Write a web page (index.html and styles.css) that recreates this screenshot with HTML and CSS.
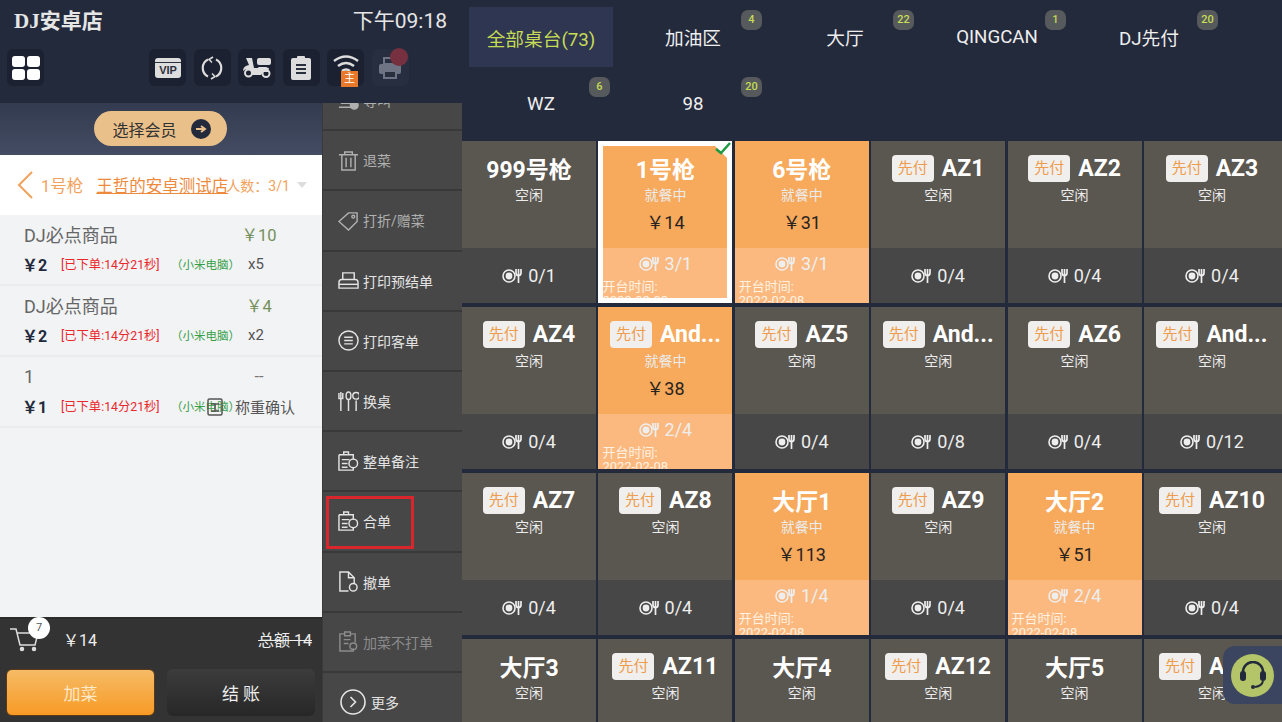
FILE: index.html

```html
<!DOCTYPE html>
<html lang="zh-CN">
<head>
  <meta charset="UTF-8" />
  <title>DJ安卓店</title>
  <link rel="stylesheet" href="styles.css">
</head>
<body>
<svg class="defs" width="0" height="0">
  <symbol id="seat" viewBox="0 0 20 16">
    <circle cx="7" cy="8" r="6" fill="none" stroke="currentColor" stroke-width="1.6"/>
    <circle cx="7" cy="8" r="3.4" fill="currentColor"/>
    <path d="M14 1v4q0 2.500 2.500 2.500t2.500-2.500v-4M16.500 1v14" fill="none" stroke="currentColor" stroke-width="1.700"/>
  </symbol>
</svg>

<div class="app">
  <section class="side">
    <header class="top">
      <div class="title-row">
        <span class="shop">DJ安卓店</span>
        <span class="clock">下午09:18</span>
      </div>
      <div class="tool-row">
        <span class="tile grid-tile">
          <svg width="28" height="24" viewBox="0 0 28 24" fill="#fff"><rect width="13" height="11" rx="3"/><rect x="15" width="13" height="11" rx="3"/><rect y="13" width="13" height="11" rx="3"/><rect x="15" y="13" width="13" height="11" rx="3"/></svg>
        </span>
        <span class="tile">
          <svg width="26" height="20" viewBox="0 0 26 20"><rect width="26" height="20" rx="3" fill="#ddd"/><rect x="1.500" y="6" width="23" height="12" fill="#ddd"/><path d="M0 4.500h26" stroke="#2a2f3d" stroke-width="1"/><text x="13" y="16" class="vip">VIP</text></svg>
        </span>
        <span class="tile">
          <svg width="24" height="24" viewBox="0 0 24 24" fill="none" stroke="#ddd" stroke-width="2.200"><path d="M8 3.500a9.500 9.500 0 0 0 0 17M16 20.500a9.500 9.500 0 0 0 0-17"/><path d="M13 1l-4 2.500 3 3M11 23l4-2.500-3-3" stroke-width="1.500"/></svg>
        </span>
        <span class="tile">
          <svg width="28" height="20" viewBox="0 0 28 20" fill="#ddd"><rect x="14" y="0" width="14" height="7" rx="2"/><rect x="15" y="9" width="9" height="4" rx="1"/><path d="M3 0h6l2 10h6l3-1 6 1-1 4H20l-2 3H9q0-7-6-6l-3 2q0-5 6-6z"/><circle cx="5.500" cy="15" r="3.500" fill="none" stroke="#ddd" stroke-width="2"/><circle cx="23" cy="15.500" r="3.500" fill="none" stroke="#ddd" stroke-width="2"/></svg>
        </span>
        <span class="tile">
          <svg width="20" height="24" viewBox="0 0 20 24"><rect y="2" width="20" height="22" rx="2" fill="#ddd"/><rect x="6" width="8" height="4" rx="1" fill="#ddd"/><path d="M5 9h10M5 13h10M5 17h10" stroke="#2a2f3d" stroke-width="2"/></svg>
        </span>
        <span class="tile wifi">
          <svg width="28" height="18" viewBox="0 0 28 18" fill="none" stroke="#ddd" stroke-width="2.500"><path d="M2 7q12-9 24 0M6 12q8-6 16 0M10 17q4-3 8 0"/></svg>
          <span class="main-tag">主</span>
        </span>
        <span class="tile dim">
          <svg width="22" height="22" viewBox="0 0 22 22" fill="#6f7484"><rect x="5" y="1" width="12" height="6" fill="none" stroke="#6f7484" stroke-width="2"/><rect y="7" width="22" height="10" rx="2"/><rect x="5" y="14" width="12" height="7" fill="#2a2f3d" stroke="#6f7484" stroke-width="2"/></svg>
          <span class="printer-dot"></span>
        </span>
      </div>
    </header>

    <div class="side-body">
      <div class="order">
        <div class="member-bar">
          <span class="member-btn">选择会员
            <svg width="20" height="20" viewBox="0 0 20 20"><circle cx="10" cy="10" r="10" fill="#232a3c"/><path d="M5 10h8M10 7l4 3-4 3" fill="none" stroke="#eac08a" stroke-width="2"/></svg>
          </span>
        </div>

        <div class="order-head">
          <svg width="16" height="28" viewBox="0 0 16 28" fill="none" stroke="#f2a25c" stroke-width="2"><path d="M15 1L2 14l13 13"/></svg>
          <span class="table-no">1号枪</span>
          <span class="store-link">王哲的安卓测试店</span>
          <span class="people">人数：3/1</span>
          <span class="caret"></span>
        </div>

        <div class="dishes">
          <div class="dish">
            <div class="dish-line"><span class="dish-name">DJ必点商品</span><span class="dish-total">￥10</span></div>
            <div class="dish-line small"><b>￥2</b><span class="ordered">[已下单:14分21秒]</span><span class="device">（小米电脑）</span><span class="qty">x5</span></div>
          </div>
          <div class="dish">
            <div class="dish-line"><span class="dish-name">DJ必点商品</span><span class="dish-total">￥4</span></div>
            <div class="dish-line small"><b>￥2</b><span class="ordered">[已下单:14分21秒]</span><span class="device">（小米电脑）</span><span class="qty">x2</span></div>
          </div>
          <div class="dish">
            <div class="dish-line"><span class="dish-name">1</span><span class="dish-total dash">--</span></div>
            <div class="dish-line small"><b>￥1</b><span class="ordered">[已下单:14分21秒]</span><span class="device">（小米电脑）</span>
              <span class="weigh">
                <svg width="16" height="18" viewBox="0 0 16 18" fill="none" stroke="#555" stroke-width="1.500"><rect x="1" y="1" width="14" height="16" rx="1.500"/><path d="M4 6h8M8 6v7M4 13h8"/></svg>称重确认
              </span>
            </div>
          </div>
        </div>

        <footer class="order-foot">
          <div class="sum-row">
            <span class="cart">
              <svg width="30" height="26" viewBox="0 0 30 26" fill="none" stroke="#ddd" stroke-width="1.500"><path d="M0 3h6l4 16h15l3-12H7"/><circle cx="12" cy="23" r="1.500" fill="#ddd"/><circle cx="24" cy="23" r="1.500" fill="#ddd"/></svg>
              <span class="cart-count">7</span>
            </span>
            <span class="pay">￥14</span>
            <span class="total"><s>总额 14</s></span>
          </div>
          <div class="foot-btns">
            <span class="btn btn-add">加菜</span>
            <span class="btn btn-pay">结 账</span>
          </div>
        </footer>
      </div>

      <nav class="menu">
        <div class="menu-list">
          <a class="menu-item off"><svg class="mi" viewBox="0 0 22 22" fill="none" stroke="currentColor" stroke-width="1.500"><path d="M1 18h13M3 14h10"/><circle cx="17" cy="16" r="4" fill="currentColor"/></svg>等叫</a>
          <a class="menu-item off"><svg class="mi" viewBox="0 0 22 22" fill="none" stroke="currentColor" stroke-width="1.500"><path d="M1 5h20M7 5V2h8v3M4 5v16h14V5M8.500 8v10M13.500 8v10"/></svg>退菜</a>
          <a class="menu-item off"><svg class="mi" viewBox="0 0 22 22" fill="none" stroke="currentColor" stroke-width="1.500"><path d="M1 12L11 3h9v9l-9 9z"/><circle cx="16" cy="7" r="1.500"/></svg>打折/赠菜</a>
          <a class="menu-item"><svg class="mi" viewBox="0 0 22 22" fill="none" stroke="currentColor" stroke-width="1.500"><path d="M5 10V3h12v7M1 19v-6q0-3 3-3h14q3 0 3 3v6z"/><path d="M1 15h20"/></svg>打印预结单</a>
          <a class="menu-item"><svg class="mi" viewBox="0 0 22 22" fill="none" stroke="currentColor" stroke-width="1.500"><circle cx="11" cy="11" r="10"/><path d="M6.500 7.500h9M6.500 11h9M6.500 14.500h9"/></svg>打印客单</a>
          <a class="menu-item"><svg class="mi" viewBox="0 0 22 22" fill="none" stroke="currentColor" stroke-width="1.500"><path d="M3 1v20M1 2v6h4V2M11 8v13M19 10v11"/><ellipse cx="11" cy="5" rx="2.500" ry="4"/><circle cx="19" cy="5" r="3.500"/></svg>换桌</a>
          <a class="menu-item"><svg class="mi" viewBox="0 0 22 22" fill="none" stroke="currentColor" stroke-width="1.500"><path d="M1 4h15v5M16 17v3H1V4M6 4V1h5v3M4 9h8M4 13h6M4 17h6"/><circle cx="16" cy="13" r="4.500"/></svg>整单备注</a>
          <a class="menu-item marked"><svg class="mi" viewBox="0 0 22 22" fill="none" stroke="currentColor" stroke-width="1.500"><path d="M1 4h15v5M16 17v3H1V4M6 4V1h5v3M4 9h8M4 13h6M4 17h6"/><circle cx="16" cy="13" r="4.500"/></svg>合单</a>
          <a class="menu-item"><svg class="mi" viewBox="0 0 22 22" fill="none" stroke="currentColor" stroke-width="1.500"><path d="M11 21H2V1h9l6 6v6M11 1v6h6"/><circle cx="16" cy="17" r="4"/></svg>撤单</a>
          <a class="menu-item off2"><svg class="mi" viewBox="0 0 22 22" fill="none" stroke="currentColor" stroke-width="1.500"><path d="M7 3H2v18h14v-3M13 3h5v9M7 1h6v4H7zM6 9h7M6 13h5"/><circle cx="16" cy="16" r="3.500"/></svg>加菜不打单</a>
          <a class="menu-item more"><svg class="mi big" viewBox="0 0 26 26" fill="none" stroke="currentColor" stroke-width="1.600"><circle cx="13" cy="13" r="12"/><path d="M10.500 8l5 5-5 5"/></svg>更多</a>
        </div>
      </nav>
    </div>
  </section>

  <main class="floor">
    <div class="tabs">
      <a class="tab active">全部桌台(73)</a>
      <a class="tab">加油区<i>4</i></a>
      <a class="tab">大厅<i>22</i></a>
      <a class="tab">QINGCAN<i>1</i></a>
      <a class="tab">DJ先付<i>20</i></a>
      <a class="tab">WZ<i>6</i></a>
      <a class="tab">98<i>20</i></a>
    </div>

    <div class="tables">
      <div class="card"><div class="card-top"><div class="name">999号枪</div><div class="state">空闲</div></div><div class="card-bot"><div class="seats"><svg class="seat"><use href="#seat"/></svg>0/1</div></div></div>
      <div class="card busy selected"><div class="card-top"><div class="name">1号枪</div><div class="state">就餐中</div><div class="amount">￥14</div></div><div class="card-bot"><div class="seats"><svg class="seat"><use href="#seat"/></svg>3/1</div><div class="since">开台时间:<br>2022-02-08</div></div>
        <span class="corner"></span>
        <svg class="check" width="16" height="13" viewBox="0 0 16 13" fill="none" stroke="#1f9b45" stroke-width="2.500"><path d="M1 7l5 4 9-10"/></svg>
      </div>
      <div class="card busy"><div class="card-top"><div class="name">6号枪</div><div class="state">就餐中</div><div class="amount">￥31</div></div><div class="card-bot"><div class="seats"><svg class="seat"><use href="#seat"/></svg>3/1</div><div class="since">开台时间:<br>2022-02-08</div></div></div>
      <div class="card"><div class="card-top"><div class="name"><span class="pre">先付</span>AZ1</div><div class="state">空闲</div></div><div class="card-bot"><div class="seats"><svg class="seat"><use href="#seat"/></svg>0/4</div></div></div>
      <div class="card"><div class="card-top"><div class="name"><span class="pre">先付</span>AZ2</div><div class="state">空闲</div></div><div class="card-bot"><div class="seats"><svg class="seat"><use href="#seat"/></svg>0/4</div></div></div>
      <div class="card"><div class="card-top"><div class="name"><span class="pre">先付</span>AZ3</div><div class="state">空闲</div></div><div class="card-bot"><div class="seats"><svg class="seat"><use href="#seat"/></svg>0/4</div></div></div>

      <div class="card"><div class="card-top"><div class="name"><span class="pre">先付</span>AZ4</div><div class="state">空闲</div></div><div class="card-bot"><div class="seats"><svg class="seat"><use href="#seat"/></svg>0/4</div></div></div>
      <div class="card busy"><div class="card-top"><div class="name"><span class="pre">先付</span>And...</div><div class="state">就餐中</div><div class="amount">￥38</div></div><div class="card-bot"><div class="seats"><svg class="seat"><use href="#seat"/></svg>2/4</div><div class="since">开台时间:<br>2022-02-08</div></div></div>
      <div class="card"><div class="card-top"><div class="name"><span class="pre">先付</span>AZ5</div><div class="state">空闲</div></div><div class="card-bot"><div class="seats"><svg class="seat"><use href="#seat"/></svg>0/4</div></div></div>
      <div class="card"><div class="card-top"><div class="name"><span class="pre">先付</span>And...</div><div class="state">空闲</div></div><div class="card-bot"><div class="seats"><svg class="seat"><use href="#seat"/></svg>0/8</div></div></div>
      <div class="card"><div class="card-top"><div class="name"><span class="pre">先付</span>AZ6</div><div class="state">空闲</div></div><div class="card-bot"><div class="seats"><svg class="seat"><use href="#seat"/></svg>0/4</div></div></div>
      <div class="card"><div class="card-top"><div class="name"><span class="pre">先付</span>And...</div><div class="state">空闲</div></div><div class="card-bot"><div class="seats"><svg class="seat"><use href="#seat"/></svg>0/12</div></div></div>

      <div class="card"><div class="card-top"><div class="name"><span class="pre">先付</span>AZ7</div><div class="state">空闲</div></div><div class="card-bot"><div class="seats"><svg class="seat"><use href="#seat"/></svg>0/4</div></div></div>
      <div class="card"><div class="card-top"><div class="name"><span class="pre">先付</span>AZ8</div><div class="state">空闲</div></div><div class="card-bot"><div class="seats"><svg class="seat"><use href="#seat"/></svg>0/4</div></div></div>
      <div class="card busy"><div class="card-top"><div class="name">大厅1</div><div class="state">就餐中</div><div class="amount">￥113</div></div><div class="card-bot"><div class="seats"><svg class="seat"><use href="#seat"/></svg>1/4</div><div class="since">开台时间:<br>2022-02-08</div></div></div>
      <div class="card"><div class="card-top"><div class="name"><span class="pre">先付</span>AZ9</div><div class="state">空闲</div></div><div class="card-bot"><div class="seats"><svg class="seat"><use href="#seat"/></svg>0/4</div></div></div>
      <div class="card busy"><div class="card-top"><div class="name">大厅2</div><div class="state">就餐中</div><div class="amount">￥51</div></div><div class="card-bot"><div class="seats"><svg class="seat"><use href="#seat"/></svg>2/4</div><div class="since">开台时间:<br>2022-02-08</div></div></div>
      <div class="card"><div class="card-top"><div class="name"><span class="pre">先付</span>AZ10</div><div class="state">空闲</div></div><div class="card-bot"><div class="seats"><svg class="seat"><use href="#seat"/></svg>0/4</div></div></div>

      <div class="card"><div class="card-top"><div class="name">大厅3</div><div class="state">空闲</div></div></div>
      <div class="card"><div class="card-top"><div class="name"><span class="pre">先付</span>AZ11</div><div class="state">空闲</div></div></div>
      <div class="card"><div class="card-top"><div class="name">大厅4</div><div class="state">空闲</div></div></div>
      <div class="card"><div class="card-top"><div class="name"><span class="pre">先付</span>AZ12</div><div class="state">空闲</div></div></div>
      <div class="card"><div class="card-top"><div class="name">大厅5</div><div class="state">空闲</div></div></div>
      <div class="card"><div class="card-top"><div class="name"><span class="pre">先付</span>AZ13</div><div class="state">空闲</div></div></div>
    </div>
  </main>
</div>

<div class="help">
  <span class="help-circle">
    <svg width="26" height="28" viewBox="0 0 26 28" fill="none" stroke="#232a3c" stroke-width="2.500"><path d="M3 14v-3a10 10 0 0 1 20 0v3"/><rect x="0" y="10" width="6" height="10" rx="3" fill="#232a3c" stroke="none"/><rect x="20" y="10" width="6" height="10" rx="3" fill="#232a3c" stroke="none"/><path d="M23 20q-1 5-8 6" stroke-width="2"/><circle cx="13" cy="26" r="2" fill="#232a3c" stroke="none"/></svg>
  </span>
</div>
</body>
</html>
```

FILE: styles.css

```css
* {
  box-sizing: border-box;
}

html, body {
  margin: 0;
  height: 722px;
  overflow: hidden;
}

body {
  font-family: Roboto, "Noto Sans CJK SC", sans-serif;
  background-color: #232a3c;
  color: #fff;
}

.defs {
  position: absolute;
}

.app {
  display: flex;
  height: 722px;
}

/* left side */
.side {
  width: 462px;
  flex: none;
  display: flex;
  flex-direction: column;
}

.top {
  height: 103px;
  background-color: #232a3c;
  padding: 0 15px 0 7px;
}

.title-row {
  display: flex;
  justify-content: space-between;
  align-items: center;
  height: 38px;
  padding-left: 7px;
}

.shop {
  font-family: "Liberation Serif", "Noto Sans CJK SC", serif;
  font-size: 21px;
  font-weight: bold;
  color: #e6e6e6;
}

.clock {
  font-size: 21px;
  color: #e6e6e6;
}

.tool-row {
  display: flex;
  gap: 7.500px;
  margin-top: 11px;
}

.tile {
  position: relative;
  width: 37px;
  height: 37px;
  border-radius: 6px;
  background-color: #1b2130;
  display: flex;
  align-items: center;
  justify-content: center;
}

.grid-tile {
  margin-right: 97.500px;
}

.vip {
  font-family: "Liberation Sans", sans-serif;
  font-size: 11px;
  font-weight: bold;
  fill: #2a2f3d;
  text-anchor: middle;
}

.wifi {
  padding-bottom: 9px;
}

.main-tag {
  position: absolute;
  left: 14px;
  top: 22px;
  width: 17px;
  height: 16px;
  background-color: #e8792b;
  font-size: 11px;
  line-height: 16px;
  text-align: center;
  color: #fff;
}

.dim {
  background-color: #272e40;
}

.printer-dot {
  position: absolute;
  right: 1px;
  top: -1px;
  width: 18px;
  height: 18px;
  border-radius: 50%;
  background-color: #76303f;
}

.side-body {
  flex: 1;
  display: flex;
  min-height: 0;
}

.order {
  width: 322px;
  flex: none;
  display: flex;
  flex-direction: column;
  background-color: #f2f3f5;
}

.member-bar {
  height: 52px;
  background: linear-gradient(#333b50, #434c62);
  display: flex;
  justify-content: center;
  align-items: center;
  padding-right: 2px;
}

.member-btn {
  width: 133px;
  height: 35px;
  margin-top: -1px;
  border-radius: 18px;
  background-color: #eac08a;
  color: #333;
  font-size: 16px;
  display: flex;
  align-items: center;
  justify-content: center;
  gap: 14px;
  padding-left: 3px;
}

.order-head {
  position: relative;
  height: 60px;
  background-color: #fff;
  display: flex;
  align-items: center;
  padding-left: 17px;
  font-size: 16.500px;
  color: #f2a25c;
  white-space: nowrap;
}

.table-no {
  margin-left: 8px;
}

.store-link {
  margin-left: 13px;
  width: 132px;
  text-decoration: underline;
  color: #ee8a3c;
}

.people {
  margin-left: -2px;
  font-size: 14px;
}

.caret {
  margin-left: 7px;
  border: 5px solid transparent;
  border-top: 6px solid #ddd;
  border-bottom: 0;
}

.dishes {
  flex: 1;
  min-height: 0;
}

.dish {
  height: 71px;
  padding: 6px 26px 0 24px;
  border-bottom: 2px solid #ebecee;
}

.dish-line {
  display: flex;
  justify-content: space-between;
  align-items: center;
  height: 26px;
  position: relative;
}

.dish-name {
  font-size: 18px;
  color: #666;
}

.dish-total {
  width: 46px;
  text-align: center;
  font-size: 16.500px;
  color: #76905c;
  margin-right: 14px;
}

.dash {
  color: #777;
}

.small {
  justify-content: flex-start;
  margin-top: 4px;
}

.small b {
  width: 39px;
  margin-left: -2px;
  font-size: 16px;
  color: #232a3c;
}

.ordered {
  width: 110px;
  font-size: 12.300px;
  color: #e8282c;
  white-space: nowrap;
}

.device {
  width: 77px;
  font-size: 11.500px;
  color: #35a045;
  white-space: nowrap;
}

.qty {
  font-size: 15px;
  color: #555;
}

.weigh {
  position: absolute;
  left: 183px;
  top: 3px;
  display: flex;
  align-items: center;
  gap: 12px;
  font-size: 15px;
  color: #555;
  white-space: nowrap;
}

.order-foot {
  height: 105px;
  background-color: #333;
  border-top: 2px solid #2b2b2b;
  padding: 0 6px;
}

.sum-row {
  display: flex;
  align-items: center;
  height: 45px;
  padding: 0 4px 5px;
  font-size: 16px;
}

.cart {
  position: relative;
  width: 53px;
  display: flex;
}

.cart-count {
  position: absolute;
  left: 18px;
  top: -9px;
  width: 22px;
  height: 22px;
  border-radius: 50%;
  background-color: #fff;
  color: #555;
  font-size: 11px;
  line-height: 22px;
  text-align: center;
}

.pay {
  color: #eee;
  font-size: 16px;
}

.total {
  margin-left: auto;
  margin-right: 0;
  color: #eee;
  font-size: 16px;
}

.foot-btns {
  display: flex;
  gap: 12px;
  margin-top: 5px;
}

.btn {
  height: 47px;
  border-radius: 6px;
  display: flex;
  align-items: center;
  justify-content: center;
  font-size: 17px;
}

.btn-add {
  width: 149px;
  background: linear-gradient(#f6bb66, #f79a25);
  border: 1px solid #5a3a18;
  color: #fde8c8;
}

.btn-pay {
  width: 148px;
  background: linear-gradient(#3c3c3c, #272727);
  color: #eee;
}

/* action column */
.menu {
  width: 140px;
  flex: none;
  overflow: hidden;
  background-color: #474747;
  border-left: 1px solid #3a3a3a;
}

.menu-list {
  margin-top: -32px;
}

.menu-item {
  position: relative;
  height: 60.200px;
  display: flex;
  align-items: center;
  gap: 4px;
  padding-left: 15px;
  border-bottom: 2px solid #393939;
  font-size: 14px;
  color: #e4e4e4;
}

.off {
  color: #b0b0b0;
}

.off2 {
  color: #8c8c8c;
}

.mi {
  width: 21px;
  height: 21px;
  flex: none;
}

.mi.big {
  width: 26px;
  height: 26px;
  margin-left: 2px;
}

.more {
  gap: 5px;
}

.marked::after {
  content: "";
  box-sizing: border-box;
  position: absolute;
  left: 3px;
  top: 4px;
  width: 88px;
  height: 53px;
  border: 3px solid #d8262c;
}

/* floor */
.floor {
  flex: 1;
  min-width: 0;
}

.tabs {
  height: 141px;
  display: grid;
  grid-template-columns: repeat(5, 152px);
  grid-auto-rows: 67px;
  padding: 3px 0 0 3px;
  align-content: start;
}

.tab {
  position: relative;
  display: flex;
  align-items: center;
  justify-content: center;
  font-size: 18.700px;
  color: #eee;
}

.active {
  margin: 4px;
  height: 60px;
  background-color: #2f3651;
  color: #c6dc55;
}

.tab i {
  position: absolute;
  right: 7px;
  top: 7px;
  min-width: 21px;
  height: 20px;
  padding: 0 3px;
  border-radius: 7px;
  background-color: #565a5c;
  color: #c6dc55;
  font-style: normal;
  font-size: 11px;
  font-weight: 500;
  line-height: 20px;
  text-align: center;
}

.tables {
  display: grid;
  grid-template-columns: repeat(5, 134px) 138px;
  column-gap: 2.400px;
  grid-auto-rows: 162px;
  row-gap: 4px;
}

.card {
  position: relative;
  overflow: hidden;
  background-color: #474747;
}

.card-top {
  height: 107px;
  background-color: #5a5650;
  padding-top: 12px;
  text-align: center;
}

.card:nth-child(6n) .card-top,
.card:nth-child(6n) .card-bot {
  padding-right: 2px;
}

.card-bot {
  height: 55px;
  position: relative;
}

.name {
  display: flex;
  align-items: center;
  justify-content: center;
  gap: 8px;
  height: 30px;
  font-size: 23px;
  font-weight: bold;
  white-space: nowrap;
}

.pre {
  width: 42px;
  height: 27px;
  border-radius: 4px;
  background-color: #f0efed;
  color: #ee9c4e;
  font-size: 15px;
  font-weight: normal;
  line-height: 27px;
}

.state {
  margin-top: 2px;
  font-size: 14px;
  line-height: 20px;
  color: #ececec;
}

.amount {
  margin-top: 5px;
  font-size: 18px;
  line-height: 26px;
  color: #2a2420;
}

.seats {
  display: flex;
  align-items: center;
  justify-content: center;
  gap: 6px;
  padding-top: 17px;
  font-size: 18px;
  line-height: 22px;
  color: #eee;
}

.seat {
  width: 20px;
  height: 16px;
}

.busy .card-top {
  background-color: #f7a95c;
}

.busy .card-bot {
  background-color: #fbb980;
  overflow: hidden;
}

.busy .seats {
  padding-top: 5px;
}

.since {
  margin-top: 5px;
  padding-left: 4px;
  font-size: 13px;
  line-height: 14px;
  color: #fff2e2;
}

.selected::before {
  content: "";
  position: absolute;
  inset: 0;
  z-index: 1;
  border: 5px solid #fff;
  pointer-events: none;
}

.corner {
  position: absolute;
  right: 0;
  top: 0;
  border-left: 22px solid transparent;
  border-top: 22px solid #fff;
  z-index: 2;
}

.check {
  position: absolute;
  right: 1px;
  top: 1px;
  z-index: 3;
}

.help {
  position: absolute;
  right: 0;
  top: 646px;
  width: 59px;
  height: 58px;
  border-radius: 12px 0 0 12px;
  background-color: #3b4560;
  display: flex;
  align-items: center;
  padding-left: 8px;
}

.help-circle {
  width: 43px;
  height: 43px;
  border-radius: 50%;
  background-color: #b4c468;
  display: flex;
  align-items: center;
  justify-content: center;
}
```
